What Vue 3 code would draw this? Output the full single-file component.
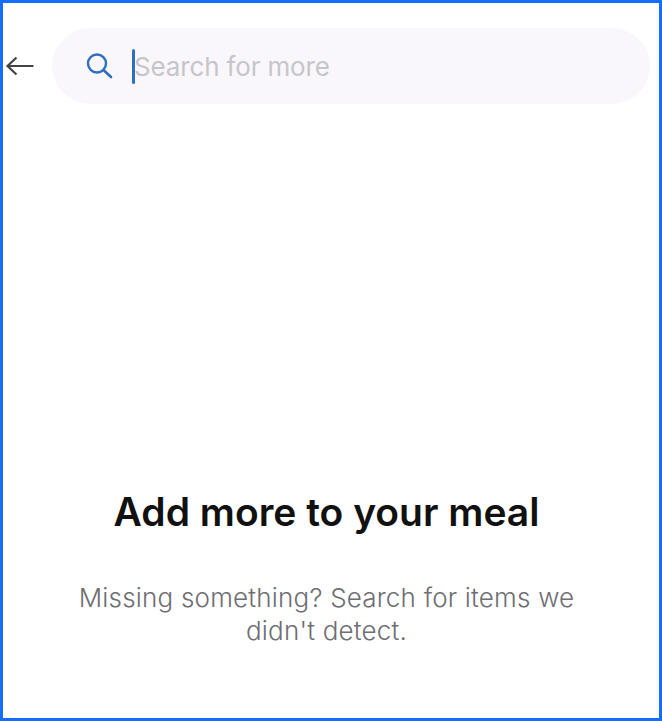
<script setup>
const title = 'Add more to your meal'
const hint = "Missing something? Search for items we didn't detect."
</script>

<template>
  <main class="screen">
    <header class="top">
      <button class="back" aria-label="Back">
        <svg width="30" height="24" viewBox="0 0 30 24" fill="none">
          <path d="M28.5 12H2.5M11.5 3.5L2.5 12L11.5 20.5" stroke="#444" stroke-width="2.2" />
        </svg>
      </button>
      <div class="search">
        <svg class="lens" width="28" height="28" viewBox="0 0 28 28" fill="none">
          <circle cx="11" cy="11.5" r="9" stroke="#2f6fc0" stroke-width="2.4" />
          <path d="M17.5 18L25 25" stroke="#2f6fc0" stroke-width="2.6" stroke-linecap="round" />
        </svg>
        <span class="caret"></span>
        <span class="placeholder">Search for more</span>
      </div>
    </header>

    <section class="empty">
      <h1>{{ title }}</h1>
      <p>{{ hint }}</p>
    </section>
  </main>
</template>

<style scoped>
.screen {
  box-sizing: border-box;
  height: 721px;
  border: 3px solid #146dff;
  background: #fff;
  display: flex;
  flex-direction: column;
  font-family: Inter, "Liberation Sans", sans-serif;
}

.top {
  display: flex;
  align-items: center;
  margin-top: 25px;
  padding-left: 2px;
  padding-right: 9px;
}

.back {
  appearance: none;
  border: none;
  background: none;
  padding: 0;
  width: 47px;
  height: 30px;
  display: flex;
  align-items: center;
}

.search {
  flex: 1;
  height: 76px;
  border-radius: 38px;
  background: #f9f7fb;
  display: flex;
  align-items: center;
  padding-left: 34px;
}

.lens {
  margin-right: 18px;
}

.caret {
  width: 3px;
  height: 35px;
  background: #2f6fc0;
  border-radius: 2px;
}

.placeholder {
  font-size: 26px;
  letter-spacing: -0.15px;
  color: #c6c6ca;
  margin-left: -1px;
  padding-top: 1px;
}

.empty {
  margin-top: 385px;
  padding-right: 9px;
  display: flex;
  flex-direction: column;
  align-items: center;
  text-align: center;
}

h1 {
  margin: 0;
  font-size: 39px;
  line-height: 46px;
  font-weight: 600;
  color: #111;
}

p {
  margin: 46px 0 0;
  width: 520px;
  font-size: 26px;
  line-height: 33px;
  font-weight: 300;
  letter-spacing: 0.2px;
  color: #6e6e73;
}
</style>
